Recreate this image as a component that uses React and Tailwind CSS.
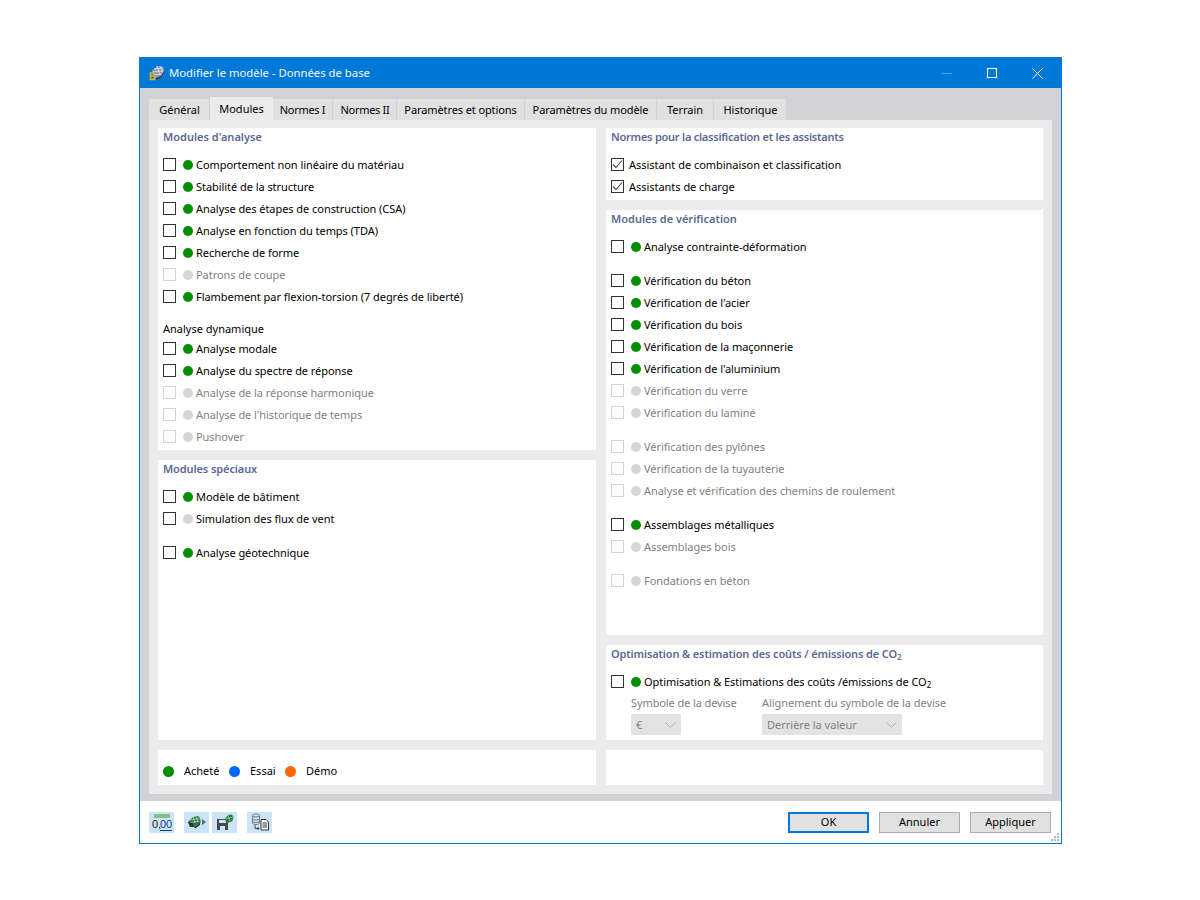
import React from 'react';

const Check = ({ checked, off }) => (
  <span className={`w-[13px] h-[13px] mb-[1px] shrink-0 border flex items-center justify-center bg-white ${off ? 'border-[#d4d4d4]' : 'border-[#333333]'}`}>
    {checked && (
      <svg width="11" height="11" viewBox="0 0 11 11" fill="none">
        <path d="M1 5.5 L4 8.5 L10 1.5" stroke="#444444" strokeWidth="1.1" />
      </svg>
    )}
  </span>
);

const Row = ({ label, off, dotOff, gap, sub }) => (
  <div className={`h-[22px] flex items-center ${gap ? 'mt-3' : ''}`}>
    <Check off={off} />
    <span className={`ml-[7px] mb-[1px] w-[10px] h-[10px] rounded-full shrink-0 ${off || dotOff ? 'bg-[#d6d6d6]' : 'bg-[#008f00]'}`} />
    <span className={`ml-[3px] whitespace-nowrap tracking-[-0.05px] ${off ? 'text-[#7f7f7f]' : 'text-black'}`}>
      {label}
      {sub && <span className="text-[8px] leading-[0] align-[-2px]">2</span>}
    </span>
  </div>
);

const CheckRow = ({ label }) => (
  <div className="h-[22px] flex items-center">
    <Check checked />
    <span className="ml-[5px] whitespace-nowrap tracking-[-0.03px] text-black">{label}</span>
  </div>
);

const Panel = ({ title, titleClass, className, children }) => (
  <div className={`bg-white px-[5px] ${className}`}>
    <div className={`h-[26px] leading-[17px] font-semibold text-[#5a6892] whitespace-nowrap ${titleClass || ''}`}>{title}</div>
    {children}
  </div>
);

const Select = ({ value, className }) => (
  <div className={`h-[21px] bg-[#e3e3e3] flex items-center justify-between pl-[5px] pr-[5px] text-[#7f7f7f] ${className}`}>
    <span>{value}</span>
    <svg width="11" height="6" viewBox="0 0 11 6" fill="none">
      <path d="M0.5 0.5 L5.5 5.5 L10.5 0.5" stroke="#b4b4b4" strokeWidth="1" />
    </svg>
  </div>
);

const LegendDot = ({ color, label, width }) => (
  <div className={`flex items-center ${width}`}>
    <span className={`w-[11px] h-[11px] rounded-full shrink-0 ${color}`} />
    <span className="ml-[10px] text-black">{label}</span>
  </div>
);

const Tab = ({ label, active, className }) => (
  <div className={`flex items-center justify-center text-black ${active
    ? 'h-[23px] bg-[#ebebeb]'
    : 'h-[21px] bg-[#e1e1e1] border-r border-[#d2d1d6]'} ${className}`}>
    {label}
  </div>
);

const ToolButton = ({ children, className }) => (
  <div className={`w-[25px] h-[21px] bg-[#cce4f7] flex items-center justify-center ${className || ''}`}>{children}</div>
);

const Button = ({ label, primary }) => (
  <div className={`w-[81px] h-[21px] bg-[#e1e1e1] flex items-center justify-center text-black ${primary ? 'border-2 border-[#0078d7]' : 'border border-[#adadad]'}`}>
    {label}
  </div>
);

const ModelIcon = () => (
  <svg width="17" height="16" viewBox="0 0 17 16">
    <path d="M4 6 L9 1 L14 1 L16.5 5 L13 11 L8 13 L5 11 Z" fill="#8d98b4" />
    <path d="M9 1 L12 10 M12 1 L15 8 M6 4 L15.5 3 M4.5 7 L16 6 M6 10 L14 9" stroke="#dfe4ef" strokeWidth="0.8" fill="none" />
    <path d="M13 11 L16.5 5 L16.5 7 L13 13 L8 15 L8 13 Z" fill="#3f4350" />
    <path d="M6.5 8 H2.5 V14.5 H6.5 V11 H3" stroke="#e6b310" strokeWidth="1.6" fill="none" />
  </svg>
);

const GreenModel = () => (
  <svg width="14" height="14" viewBox="0 0 14 14">
    <path d="M1 7 L6 2 L11 1 L13 3 L12 9 L7 12 L3 12 Z" fill="#2e7d46" />
    <path d="M6 2 L8 8 M9 1.5 L11 7 M3 5 L12.5 3.5 M2 8 L12 6" stroke="#a9d8b6" strokeWidth="0.8" fill="none" />
    <path d="M1 7 L3 12 L7 12 L6 8 Z" fill="#333333" />
    <path d="M7 12 L12 9 L13 3 L13.5 6 L13 10 L8 13.5 Z" fill="#333333" />
  </svg>
);

const App = () => {
  return (
    <div className="w-full h-[900px] bg-white pt-[57px] flex justify-center font-['Noto_Sans',sans-serif] text-[11px] leading-[16px]">
      <div className="w-[923px] h-[787px] ml-[1px] border border-[#0078d7] flex flex-col bg-white">
        <div className="h-[30px] shrink-0 bg-[#0078d7] flex items-center pl-[8px] text-white">
          <ModelIcon />
          <span className="ml-[4px] text-[11.3px] text-[#f2f8fd]">Modifier le modèle - Données de base</span>
          <div className="ml-auto flex items-center">
            <span className="w-[10px] h-[1px] bg-[#4da1e3]" />
            <span className="ml-[35px] w-[10px] h-[10px] border border-white" />
            <svg className="ml-[35px] mr-[18px]" width="11" height="11" viewBox="0 0 11 11">
              <path d="M0.5 0.5 L10.5 10.5 M10.5 0.5 L0.5 10.5" stroke="white" strokeWidth="1" />
            </svg>
          </div>
        </div>

        <div className="h-[713px] shrink-0 bg-[#d2d1d6] pt-[9px] px-[9px] flex flex-col">
          <div className="h-[23px] shrink-0 flex items-end">
            <Tab label="Général" className="w-[61px] pl-[1px]" />
            <Tab label="Modules" active className="w-[63px]" />
            <Tab label="Normes I" className="w-[60px] tracking-[-0.3px]" />
            <Tab label="Normes II" className="w-[64px] pl-[1px] tracking-[-0.3px]" />
            <Tab label="Paramètres et options" className="w-[128px] tracking-[-0.1px]" />
            <Tab label="Paramètres du modèle" className="w-[132px] tracking-[-0.1px]" />
            <Tab label="Terrain" className="w-[57px]" />
            <Tab label="Historique" className="w-[73px] pl-[1px]" />
          </div>
          <div className="h-[674px] bg-[#ebebeb] pt-[8px] px-[9px] grid grid-cols-[438px_437px] gap-x-[10px] gap-y-[10px] grid-rows-[612px_35px]">
            <div className="flex flex-col gap-[10px]">
              <Panel title="Modules d'analyse" className="h-[322px]">
                <Row label="Comportement non linéaire du matériau" />
                <Row label="Stabilité de la structure" />
                <Row label="Analyse des étapes de construction (CSA)" />
                <Row label="Analyse en fonction du temps (TDA)" />
                <Row label="Recherche de forme" />
                <Row label="Patrons de coupe" off />
                <Row label="Flambement par flexion-torsion (7 degrés de liberté)" />
                <div className="mt-3 h-[18px] leading-[18px] text-black">Analyse dynamique</div>
                <Row label="Analyse modale" />
                <Row label="Analyse du spectre de réponse" />
                <Row label="Analyse de la réponse harmonique" off />
                <Row label="Analyse de l'historique de temps" off />
                <Row label="Pushover" off />
              </Panel>
              <Panel title="Modules spéciaux" titleClass="tracking-[-0.1px]" className="flex-1">
                <Row label="Modèle de bâtiment" />
                <Row label="Simulation des flux de vent" dotOff />
                <Row label="Analyse géotechnique" gap />
              </Panel>
            </div>

            <div className="flex flex-col gap-[10px]">
              <Panel title="Normes pour la classification et les assistants" titleClass="tracking-[-0.24px]" className="h-[72px]">
                <CheckRow label="Assistant de combinaison et classification" />
                <CheckRow label="Assistants de charge" />
              </Panel>
              <Panel title="Modules de vérification" className="h-[425px]">
                <Row label="Analyse contrainte-déformation" />
                <Row label="Vérification du béton" gap />
                <Row label="Vérification de l'acier" />
                <Row label="Vérification du bois" />
                <Row label="Vérification de la maçonnerie" />
                <Row label="Vérification de l'aluminium" />
                <Row label="Vérification du verre" off />
                <Row label="Vérification du laminé" off />
                <Row label="Vérification des pylônes" off gap />
                <Row label="Vérification de la tuyauterie" off />
                <Row label="Analyse et vérification des chemins de roulement" off />
                <Row label="Assemblages métalliques" gap />
                <Row label="Assemblages bois" off />
                <Row label="Fondations en béton" off gap />
              </Panel>
              <Panel
                title={<>Optimisation &amp; estimation des coûts / émissions de CO<span className="text-[8px] leading-[0] align-[-2px]">2</span></>}
                titleClass="tracking-[-0.14px]"
                className="flex-1"
              >
                <Row label="Optimisation & Estimations des coûts /émissions de CO" sub />
                <div className="pl-[20px] flex text-[#7f7f7f]">
                  <div className="w-[131px]">
                    <div className="h-[21px] leading-[20px] whitespace-nowrap tracking-[-0.1px]">Symbole de la devise</div>
                    <Select value="€" className="w-[50px]" />
                  </div>
                  <div>
                    <div className="h-[21px] leading-[20px] whitespace-nowrap tracking-[-0.05px]">Alignement du symbole de la devise</div>
                    <Select value="Derrière la valeur" className="w-[140px]" />
                  </div>
                </div>
              </Panel>
            </div>

            <div className="bg-white px-[5px] pt-[7px] flex items-center">
              <LegendDot color="bg-[#008f00]" label="Acheté" width="w-[66px]" />
              <LegendDot color="bg-[#0066ff]" label="Essai" width="w-[56px]" />
              <LegendDot color="bg-[#ff6600]" label="Démo" />
            </div>
            <div className="bg-white" />
          </div>
        </div>

        <div className="flex-1 relative flex items-center pl-[9px] pr-[10px]">
          <ToolButton>
            <svg width="21" height="19" viewBox="0 0 21 19">
              <rect x="3" y="1" width="16" height="4" fill="#7fc27f" />
              <text x="1" y="15" fontSize="11" fontFamily="Liberation Sans" fill="#1a1a1a">0,</text>
              <text x="9" y="15" fontSize="11" fontFamily="Liberation Sans" fill="#1a3a8a">00</text>
              <path d="M9 17.5 H21" stroke="#1a3a8a" strokeWidth="1" />
            </svg>
          </ToolButton>
          <ToolButton className="ml-[10px]">
            <GreenModel />
            <svg className="ml-[1px]" width="4" height="6" viewBox="0 0 4 6"><path d="M0 0 L4 3 L0 6 Z" fill="#666666" /></svg>
          </ToolButton>
          <ToolButton className="ml-[3px]">
            <svg width="18" height="17" viewBox="0 0 18 17">
              <path d="M1 5 H12 V16 H1 Z" fill="#484848" />
              <rect x="3" y="6" width="7" height="3" fill="#cce4f7" />
              <rect x="4" y="12" width="5" height="4" fill="#cce4f7" />
              <path d="M9 5 L12 1 L16 0.5 L17.5 3 L16.5 7 L12 9 L10 8 Z" fill="#2e7d46" />
              <path d="M12 1 L14 7 M10 5 L17 3" stroke="#a9d8b6" strokeWidth="0.7" fill="none" />
            </svg>
          </ToolButton>
          <ToolButton className="ml-[10px]">
            <svg width="20" height="18" viewBox="0 0 20 18">
              <ellipse cx="6" cy="2.5" rx="3.5" ry="1.5" fill="none" stroke="#777777" />
              <path d="M2.5 2.5 V10 C2.5 12 9.5 12 9.5 10 V2.5 M2.5 5.5 C2.5 7.5 9.5 7.5 9.5 5.5 M2.5 8 C2.5 10 9.5 10 9.5 8" fill="none" stroke="#777777" />
              <path d="M5 12 V15.5 H9 M7.5 14 L9 15.5 L7.5 17" fill="none" stroke="#444444" />
              <path d="M11 6.5 H16 L18.5 9 V17 H11 Z" fill="white" stroke="#333333" />
              <path d="M12.5 10 H17 M12.5 12 H17 M12.5 14 H17" stroke="#333333" />
            </svg>
          </ToolButton>
          <div className="ml-auto flex gap-[10px]">
            <Button label="OK" primary />
            <Button label="Annuler" />
            <Button label="Appliquer" />
          </div>
          <svg className="absolute right-[1px] bottom-[1px]" width="10" height="10" viewBox="0 0 10 10">
            <path d="M7 1 h2 v2 h-2 z M4 4 h2 v2 h-2 z M7 4 h2 v2 h-2 z M1 7 h2 v2 h-2 z M4 7 h2 v2 h-2 z M7 7 h2 v2 h-2 z" fill="#b4b4b4" />
          </svg>
        </div>
      </div>
    </div>
  );
};

export default App;
